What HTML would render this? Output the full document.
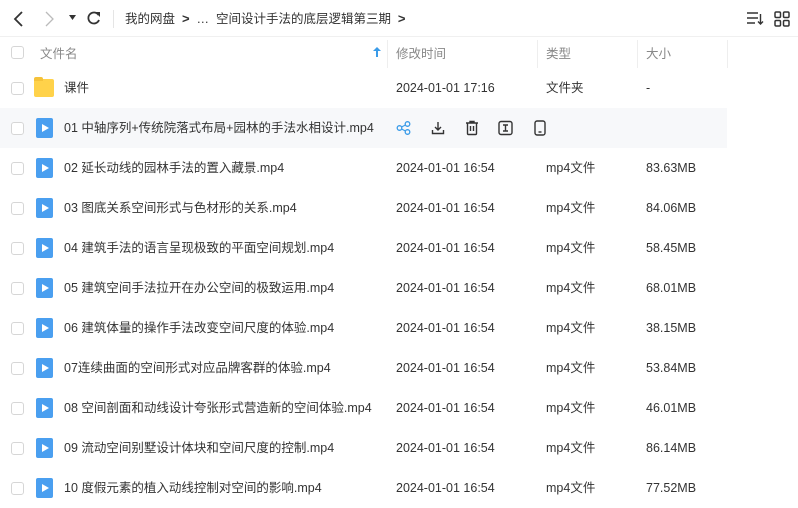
<!DOCTYPE html>
<html><head><meta charset="utf-8"><style>
*{margin:0;padding:0;box-sizing:border-box}
body{width:798px;height:506px;overflow:hidden;background:#fff;font-family:"Liberation Sans","Noto Sans CJK SC",sans-serif;color:#333;position:relative}
.t{position:absolute;white-space:nowrap}
.row .t{top:0;line-height:40px;height:40px}
.cb{position:absolute;left:11px;width:13px;height:13px;border:1px solid #d6d6d6;border-radius:3px;background:#fff}
.row{position:absolute;left:0;width:798px;height:40px;font-size:12.5px}
.fi{position:absolute;left:36px;width:17px;height:20px;background:#4a9ff0;border-radius:2px}
.fi:after{content:"";position:absolute;left:6px;top:6px;border-left:7px solid #fff;border-top:4px solid transparent;border-bottom:4px solid transparent}
.sep{position:absolute;top:40px;width:1px;height:28px;background:#eee}
.hd{line-height:28px;top:40px;height:28px;font-size:12.5px;color:#888}
</style></head><body>
<svg class="t" style="left:10px;top:9px" width="20" height="20"><path d="M12 3 L5 10 L12 17" fill="none" stroke="#333" stroke-width="1.8"/></svg>
<svg class="t" style="left:40px;top:9px" width="20" height="20"><path d="M6 3 L13 10 L6 17" fill="none" stroke="#bbb" stroke-width="1.3"/></svg>
<svg class="t" style="left:69px;top:14px" width="8" height="8"><path d="M0 1 L7 1 L3.5 6Z" fill="#333"/></svg>
<svg class="t" style="left:86px;top:10px" width="16" height="16"><path d="M12.5 5 A5.5 5.5 0 1 0 13 10" fill="none" stroke="#333" stroke-width="1.8"/><path d="M9 2 L14 2 L14 7Z" fill="#333"/></svg>
<div class="t" style="left:113px;top:10px;width:1px;height:18px;background:#e5e5e5"></div>
<div class="t" style="left:125px;top:8px;line-height:22px;font-size:12.5px;color:#333">我的网盘 &nbsp;<b style="font-size:13px">&gt;</b>&nbsp; … &nbsp;空间设计手法的底层逻辑第三期&nbsp; <b style="font-size:13px">&gt;</b></div>
<svg class="t" style="left:746px;top:11px" width="18" height="16"><path d="M1 2 H12 M1 7 H12 M1 12 H9 M14.5 3 V13 M12 10.5 L14.5 13 L17 10.5" fill="none" stroke="#333" stroke-width="1.4"/></svg>
<svg class="t" style="left:774px;top:11px" width="16" height="16"><rect x="1" y="1" width="5.5" height="5.5" rx="1.2" fill="none" stroke="#333" stroke-width="1.5"/><rect x="9.5" y="1" width="5.5" height="5.5" rx="1.2" fill="none" stroke="#333" stroke-width="1.5"/><rect x="1" y="9.5" width="5.5" height="5.5" rx="1.2" fill="none" stroke="#333" stroke-width="1.5"/><rect x="9.5" y="9.5" width="5.5" height="5.5" rx="1.2" fill="none" stroke="#333" stroke-width="1.5"/></svg>
<div class="t" style="left:0;top:36px;width:798px;height:1px;background:#f0f0f0"></div>
<div class="cb" style="top:46px"></div>
<div class="t hd" style="left:40px">文件名</div>
<svg class="t" style="left:373px;top:47px" width="8" height="10"><path d="M4 0 L8 4 L5 4 L5 10 L3 10 L3 4 L0 4Z" fill="#3a9be8"/></svg>
<div class="sep" style="left:387px"></div><div class="sep" style="left:537px"></div><div class="sep" style="left:637px"></div><div class="sep" style="left:727px"></div>
<div class="t hd" style="left:396px">修改时间</div>
<div class="t hd" style="left:546px">类型</div>
<div class="t hd" style="left:646px">大小</div>
<div class="row" style="top:68px">
<div class="cb" style="top:14px"></div>
<div style="position:absolute;left:34px;top:11px;width:20px;height:18px;background:#ffd24a;border-radius:2px"></div>
<div style="position:absolute;left:34px;top:9px;width:9px;height:4px;background:#f5c23a;border-radius:2px 2px 0 0"></div>
<div class="t" style="left:64px">课件</div>
<div class="t" style="left:396px">2024-01-01 17:16</div>
<div class="t" style="left:546px">文件夹</div>
<div class="t" style="left:646px">-</div>
</div>
<div class="row" style="top:108px;width:727px;background:#f7f8fa">
<div class="cb" style="top:14px"></div><div class="fi" style="top:10px"></div>
<div class="t" style="left:64px">01 中轴序列+传统院落式布局+园林的手法水相设计.mp4</div>
<svg style="position:absolute;left:396px;top:13px" width="16" height="14"><circle cx="3.5" cy="7" r="2.3" fill="none" stroke="#3a9be8" stroke-width="1.3"/><circle cx="11.5" cy="3" r="2.3" fill="none" stroke="#3a9be8" stroke-width="1.3"/><circle cx="11.5" cy="11" r="2.3" fill="none" stroke="#3a9be8" stroke-width="1.3"/><path d="M5.5 6 L9.5 4 M5.5 8 L9.5 10" stroke="#3a9be8" stroke-width="1.2"/></svg>
<svg style="position:absolute;left:431px;top:13px" width="14" height="14"><path d="M7 1 V9 M4 6 L7 9 L10 6 M1.5 9 V12.5 H12.5 V9" fill="none" stroke="#333" stroke-width="1.4"/></svg>
<svg style="position:absolute;left:465px;top:12px" width="14" height="16"><path d="M1 3 H13 M5 3 V1.5 H9 V3 M2.5 3 V13.5 Q2.5 14.5 3.5 14.5 H10.5 Q11.5 14.5 11.5 13.5 V3 M5.5 6 V11 M8.5 6 V11" fill="none" stroke="#333" stroke-width="1.4"/></svg>
<svg style="position:absolute;left:498px;top:12px" width="16" height="16"><rect x="1" y="1.5" width="13" height="13" rx="2" fill="none" stroke="#333" stroke-width="1.4"/><path d="M5 5 H10 M5 11 H10 M7.5 5 V11" stroke="#333" stroke-width="1.4"/></svg>
<svg style="position:absolute;left:534px;top:12px" width="12" height="16"><rect x="1" y="1" width="10" height="14" rx="2" fill="none" stroke="#333" stroke-width="1.4"/><path d="M4.5 12 H7.5" stroke="#333" stroke-width="1.4"/></svg>
</div>
<div class="row" style="top:148px"><div class="cb" style="top:14px"></div><div class="fi" style="top:10px"></div><div class="t" style="left:64px">02 延长动线的园林手法的置入藏景.mp4</div><div class="t" style="left:396px">2024-01-01 16:54</div><div class="t" style="left:546px">mp4文件</div><div class="t" style="left:646px">83.63MB</div></div>
<div class="row" style="top:188px"><div class="cb" style="top:14px"></div><div class="fi" style="top:10px"></div><div class="t" style="left:64px">03 图底关系空间形式与色材形的关系.mp4</div><div class="t" style="left:396px">2024-01-01 16:54</div><div class="t" style="left:546px">mp4文件</div><div class="t" style="left:646px">84.06MB</div></div>
<div class="row" style="top:228px"><div class="cb" style="top:14px"></div><div class="fi" style="top:10px"></div><div class="t" style="left:64px">04 建筑手法的语言呈现极致的平面空间规划.mp4</div><div class="t" style="left:396px">2024-01-01 16:54</div><div class="t" style="left:546px">mp4文件</div><div class="t" style="left:646px">58.45MB</div></div>
<div class="row" style="top:268px"><div class="cb" style="top:14px"></div><div class="fi" style="top:10px"></div><div class="t" style="left:64px">05 建筑空间手法拉开在办公空间的极致运用.mp4</div><div class="t" style="left:396px">2024-01-01 16:54</div><div class="t" style="left:546px">mp4文件</div><div class="t" style="left:646px">68.01MB</div></div>
<div class="row" style="top:308px"><div class="cb" style="top:14px"></div><div class="fi" style="top:10px"></div><div class="t" style="left:64px">06 建筑体量的操作手法改变空间尺度的体验.mp4</div><div class="t" style="left:396px">2024-01-01 16:54</div><div class="t" style="left:546px">mp4文件</div><div class="t" style="left:646px">38.15MB</div></div>
<div class="row" style="top:348px"><div class="cb" style="top:14px"></div><div class="fi" style="top:10px"></div><div class="t" style="left:64px">07连续曲面的空间形式对应品牌客群的体验.mp4</div><div class="t" style="left:396px">2024-01-01 16:54</div><div class="t" style="left:546px">mp4文件</div><div class="t" style="left:646px">53.84MB</div></div>
<div class="row" style="top:388px"><div class="cb" style="top:14px"></div><div class="fi" style="top:10px"></div><div class="t" style="left:64px">08 空间剖面和动线设计夸张形式营造新的空间体验.mp4</div><div class="t" style="left:396px">2024-01-01 16:54</div><div class="t" style="left:546px">mp4文件</div><div class="t" style="left:646px">46.01MB</div></div>
<div class="row" style="top:428px"><div class="cb" style="top:14px"></div><div class="fi" style="top:10px"></div><div class="t" style="left:64px">09 流动空间别墅设计体块和空间尺度的控制.mp4</div><div class="t" style="left:396px">2024-01-01 16:54</div><div class="t" style="left:546px">mp4文件</div><div class="t" style="left:646px">86.14MB</div></div>
<div class="row" style="top:468px"><div class="cb" style="top:14px"></div><div class="fi" style="top:10px"></div><div class="t" style="left:64px">10 度假元素的植入动线控制对空间的影响.mp4</div><div class="t" style="left:396px">2024-01-01 16:54</div><div class="t" style="left:546px">mp4文件</div><div class="t" style="left:646px">77.52MB</div></div>
</body></html>
